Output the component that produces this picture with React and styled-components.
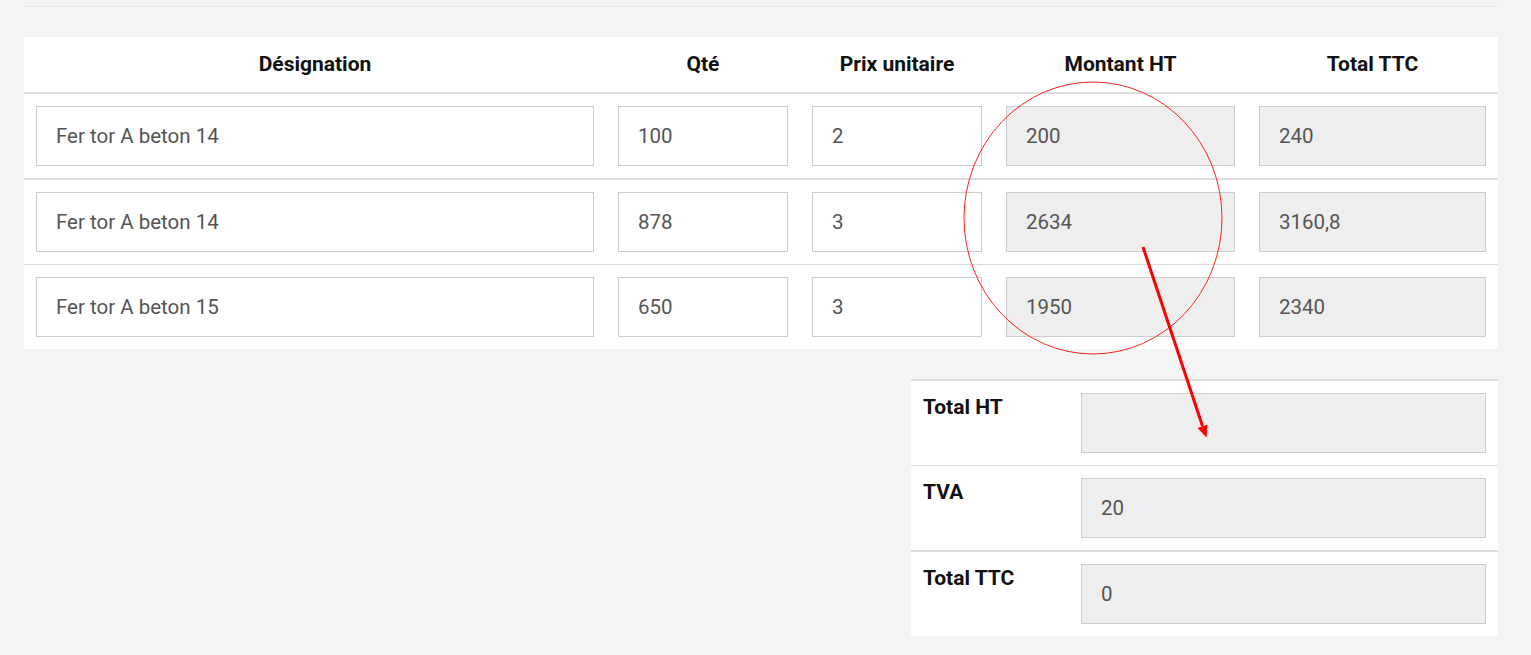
import React from "react"
import styled, { createGlobalStyle } from "styled-components"

const GlobalStyle = createGlobalStyle`
  html, body {
    margin: 0;
    padding: 0;
    background: #f4f4f4;
    font-family: Roboto, "Liberation Sans", sans-serif;
  }
  * {
    box-sizing: border-box;
  }
`

const Page = styled.div`
  position: relative;
  width: 1531px;
  height: 655px;
  padding: 6px 33px 0 24px;
  overflow: hidden;
`

const Rule = styled.div`
  height: 1px;
  background: #e8e8e8;
`

const Table = styled.table`
  width: 100%;
  margin-top: 30px;
  border-collapse: collapse;
  background: #fff;
`

const Th = styled.th`
  height: 56px;
  padding: 0 12px 2px;
  font-size: 21px;
  font-weight: 700;
  color: #111;
  text-align: center;
  border-bottom: 2px solid #ddd;
  width: ${p => p.$w}px;
`

const Row = styled.tr`
  border-bottom: ${p => (p.$thick ? "2px" : "1px")} solid #ddd;

  &:last-child {
    border-bottom: none;
  }
`

const Td = styled.td`
  padding: 12px;
  vertical-align: top;
`

const Field = styled.input`
  display: block;
  width: 100%;
  height: 60px;
  padding: 0 19px;
  border: 1px solid #ccc;
  border-radius: 0;
  background: ${p => (p.disabled ? "#eee" : "#fff")};
  font-family: Roboto, "Liberation Sans", sans-serif;
  font-size: 20.5px;
  color: #555;
  outline: none;

  &:disabled {
    color: #555;
    -webkit-text-fill-color: #555;
    opacity: 1;
  }
`

const SummaryWrap = styled.div`
  display: flex;
  justify-content: flex-end;
  margin-top: 30px;
`

const Summary = styled.table`
  width: 587px;
  border-collapse: collapse;
  background: #fff;
  border-top: 2px solid #ddd;
`

const Label = styled.td`
  width: 158px;
  padding: 14px 12px 12px;
  vertical-align: top;
  font-size: 21px;
  font-weight: 700;
  color: #111;
`

const Overlay = styled.svg`
  position: absolute;
  left: 0;
  top: 0;
  pointer-events: none;
`

const lines = [
  { name: "Fer tor A beton 14", qty: "100", price: "2", ht: "200", ttc: "240" },
  { name: "Fer tor A beton 14", qty: "878", price: "3", ht: "2634", ttc: "3160,8" },
  { name: "Fer tor A beton 15", qty: "650", price: "3", ht: "1950", ttc: "2340" },
]

const totals = [
  { label: "Total HT", value: "" },
  { label: "TVA", value: "20" },
  { label: "Total TTC", value: "0" },
]

const App = () => {
  return (
    <Page>
      <GlobalStyle />
      <Rule />
      <Table>
        <thead>
          <tr>
            <Th $w={582}>Désignation</Th>
            <Th $w={194}>Qté</Th>
            <Th $w={194}>Prix unitaire</Th>
            <Th $w={253}>Montant HT</Th>
            <Th $w={251}>Total TTC</Th>
          </tr>
        </thead>
        <tbody>
          {lines.map((l, i) => (
            <Row key={i} $thick={i === 0}>
              <Td><Field defaultValue={l.name} /></Td>
              <Td><Field defaultValue={l.qty} /></Td>
              <Td><Field defaultValue={l.price} /></Td>
              <Td><Field disabled value={l.ht} readOnly /></Td>
              <Td><Field disabled value={l.ttc} readOnly /></Td>
            </Row>
          ))}
        </tbody>
      </Table>
      <SummaryWrap>
        <Summary>
          <tbody>
            {totals.map((t, i) => (
              <Row key={t.label} $thick={i === 1}>
                <Label>{t.label}</Label>
                <Td><Field disabled value={t.value} readOnly /></Td>
              </Row>
            ))}
          </tbody>
        </Summary>
      </SummaryWrap>

      <Overlay width="1531" height="655" viewBox="0 0 1531 655">
        <ellipse cx="1093" cy="218" rx="129" ry="136" fill="none" stroke="#f22" strokeWidth="1" />
        <line x1="1143" y1="247" x2="1202.5" y2="426" stroke="#f00" strokeWidth="3" />
        <polygon points="1206.5,437.5 1207.5,424.5 1197.5,428" fill="#f00" />
      </Overlay>
    </Page>
  )
}

export default App
